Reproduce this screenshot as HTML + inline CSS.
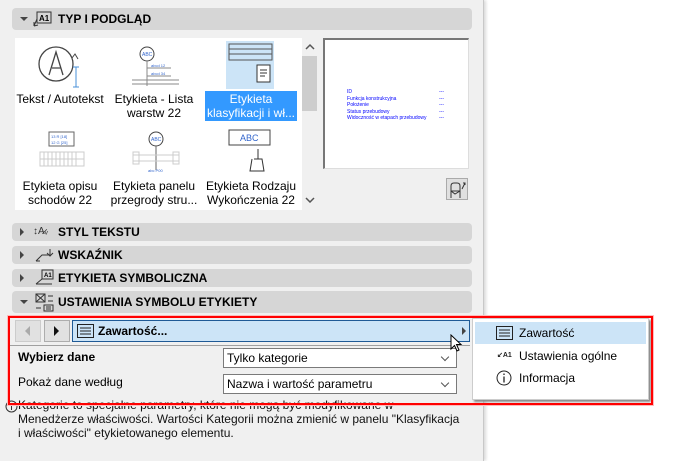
<!DOCTYPE html>
<html><head><meta charset="utf-8"><style>
*{margin:0;padding:0;box-sizing:border-box}
body{width:690px;height:461px;overflow:hidden;background:#fff;font-family:"Liberation Sans",sans-serif;font-size:12px;color:#000;position:relative}
.abs{position:absolute}
#left{left:0;top:0;width:484px;height:461px;background:#f0f0f0;border-right:1px solid #c8c8c8;box-shadow:2px 0 3px rgba(0,0,0,.15)}
.hdr{position:absolute;left:12px;width:460px;background:#d6d6d6;border-radius:4px;font-weight:bold;font-size:12px;line-height:18px}
.hdr .t{position:absolute;left:46px}
.tri{position:absolute;left:8px;width:0;height:0}
.lbl{position:absolute;text-align:center;font-size:12px;line-height:14px;width:96px}
.combo{position:absolute;left:223px;width:234px;background:#fff;border:1px solid #7a7a7a;font-size:12px;line-height:18px;padding-left:3px}
.combo:after{content:"";position:absolute;right:8px;top:5px;width:5px;height:5px;border-right:1px solid #555;border-bottom:1px solid #555;transform:rotate(45deg)}
</style></head><body>
<div id="left" class="abs"></div>

<div class="hdr" style="top:8px;height:22px;line-height:22px"><div class="tri" style="top:9px;border-left:4px solid transparent;border-right:4px solid transparent;border-top:4px solid #444"></div>
<svg class="abs" style="left:20px;top:2px" width="22" height="18"><rect x="5" y="2" width="14" height="11" fill="none" stroke="#333"/><text x="7" y="11" font-size="8" font-family="Liberation Sans">A1</text><path d="M5 9 L2 16 M2 16 L6 15 M2 16 L2 12" stroke="#333" fill="none"/></svg>
<span class="t">TYP I PODGLĄD</span></div>

<div class="abs" style="left:15px;top:38px;width:287px;height:172px;background:#fff"></div>
<svg class="abs" style="left:36px;top:40px" width="50" height="50"><circle cx="20" cy="24" r="17" fill="none" stroke="#444" stroke-width="1.3"/><path d="M36 18 L39 14 L42 19" fill="none" stroke="#444"/><path d="M13 35 L20 12 L27 35 M16 28 L25 28" stroke="#444" fill="none" stroke-width="1.3"/><path d="M40 27 V47 M37 27 H43 M37 47 H43" stroke="#4a90d9"/></svg>
<div class="lbl" style="left:12px;top:92px">Tekst / Autotekst</div>
<svg class="abs" style="left:131px;top:44px" width="50" height="48"><circle cx="16" cy="10" r="7" fill="#fff" stroke="#444"/><text x="11" y="12" font-size="5" fill="#36c">ABC</text><path d="M16 17 V42 M16 24 H40 M16 32 H40 M1 36 H48 M1 40 H48" stroke="#888" fill="none"/><text x="20" y="23" font-size="4" fill="#36c">abcd 12</text><text x="20" y="31" font-size="4" fill="#36c">abcd 34</text></svg>
<div class="lbl" style="left:106px;top:92px">Etykieta - Lista<br>warstw 22</div>
<div class="abs" style="left:226px;top:41px;width:48px;height:48px;background:#cce4f7"></div>
<svg class="abs" style="left:228px;top:43px" width="46" height="46"><rect x="1" y="1" width="43" height="16" fill="none" stroke="#555"/><path d="M1 6 H44 M1 11 H44" stroke="#555"/><rect x="29" y="22" width="13" height="17" fill="#fff" stroke="#333"/><path d="M32 27 H39 M32 30 H39 M32 33 H37" stroke="#333"/></svg>
<div class="lbl" style="left:205px;top:91px;width:92px;background:#3399ff;color:#fff;padding:1px 0">Etykieta<br>klasyfikacji i wł...</div>
<svg class="abs" style="left:38px;top:130px" width="48" height="38"><rect x="11" y="2" width="25" height="14" fill="none" stroke="#666"/><text x="13" y="8" font-size="4" fill="#36c">13 R [18]</text><text x="13" y="14" font-size="4" fill="#36c">12 G [25]</text><rect x="2" y="22" width="44" height="14" fill="none" stroke="#ccc"/><path d="M6 22 V36 M10 22 V36 M14 22 V36 M18 22 V36 M22 22 V36 M26 22 V36 M30 22 V36 M34 22 V36 M38 22 V36 M2 29 H46" stroke="#ccc"/></svg>
<div class="lbl" style="left:12px;top:179px">Etykieta opisu<br>schodów 22</div>
<svg class="abs" style="left:131px;top:130px" width="50" height="44"><circle cx="25" cy="9" r="7" fill="#fff" stroke="#444"/><text x="20" y="11" font-size="5" fill="#36c">ABC</text><path d="M25 16 V40" stroke="#666"/><path d="M2 25 H48 M2 31 H48" stroke="#ccc"/><rect x="2" y="22" width="6" height="12" fill="none" stroke="#ccc"/><rect x="42" y="22" width="6" height="12" fill="none" stroke="#ccc"/><text x="17" y="42" font-size="4" fill="#36c">abc P00</text></svg>
<div class="lbl" style="left:106px;top:179px">Etykieta panelu<br>przegrody stru...</div>
<svg class="abs" style="left:228px;top:129px" width="46" height="46"><rect x="1" y="1" width="41" height="15" fill="#fff" stroke="#444"/><text x="12" y="12" font-size="9" fill="#36c">ABC</text><path d="M30 20 V30 M26 30 H34 L36 42 H22 L24 30" fill="none" stroke="#333"/></svg>
<div class="lbl" style="left:200px;top:179px;width:102px">Etykieta Rodzaju<br>Wykończenia 22</div>

<div class="abs" style="left:302px;top:38px;width:15px;height:172px;background:#f0f0f0"></div>
<div class="abs" style="left:302px;top:56px;width:15px;height:55px;background:#cdcdcd"></div>
<svg class="abs" style="left:304px;top:43px" width="12" height="160"><path d="M2 6 L6 2 L10 6" stroke="#555" fill="none" stroke-width="1.5"/><path d="M2 155 L6 159 L10 155" stroke="#555" fill="none" stroke-width="1.5"/></svg>

<div class="abs" style="left:323px;top:38px;width:146px;height:131px;background:#fff;border:1px solid #ddd;border-top:2px solid #777;border-left:2px solid #777;font-size:5px;color:#00f;line-height:6.5px">
<div class="abs" style="left:22px;top:49px">ID<br>Funkcja konstrukcyjna<br>Położenie<br>Status przebudowy<br>Widoczność w etapach przebudowy</div>
<div class="abs" style="left:114px;top:49px">---<br>---<br>---<br>---<br>---</div></div>
<div class="abs" style="left:446px;top:178px;width:22px;height:22px;background:#e0e0e0;border:1px solid #aaa"></div>
<svg class="abs" style="left:448px;top:180px" width="20" height="20"><path d="M3 18 V6 Q3 3 6 3 H9 Q12 3 12 6 V18 M3 11 H12 M3 11 L7 14 L12 11" fill="none" stroke="#333"/><path d="M14 9 L17 3 M15 3 H17 V5" stroke="#333" fill="none"/></svg>

<div class="hdr" style="top:223px;height:18px"><div class="tri" style="top:5px;border-top:4px solid transparent;border-bottom:4px solid transparent;border-left:4px solid #444"></div><span class="abs" style="left:21px;top:0;font-weight:normal;font-size:10px;color:#333">↕A̷ᵥ</span><span class="t">STYL TEKSTU</span></div>
<div class="hdr" style="top:246px;height:18px"><div class="tri" style="top:5px;border-top:4px solid transparent;border-bottom:4px solid transparent;border-left:4px solid #444"></div><svg class="abs" style="left:22px;top:1px" width="20" height="16"><path d="M2 14 L8 8 H16 V2 M13 6 L16 9 L19 6 M2 14 H6" fill="none" stroke="#333"/></svg><span class="t">WSKAŹNIK</span></div>
<div class="hdr" style="top:269px;height:18px"><div class="tri" style="top:5px;border-top:4px solid transparent;border-bottom:4px solid transparent;border-left:4px solid #444"></div><svg class="abs" style="left:22px;top:0" width="22" height="17"><rect x="8" y="1" width="11" height="9" fill="none" stroke="#333"/><text x="10" y="8" font-size="6">A1</text><path d="M2 15 L8 10 M2 15 H18" stroke="#333"/></svg><span class="t">ETYKIETA SYMBOLICZNA</span></div>
<div class="hdr" style="top:291px;height:22px;line-height:22px"><div class="tri" style="top:9px;border-left:4px solid transparent;border-right:4px solid transparent;border-top:4px solid #444"></div><svg class="abs" style="left:22px;top:2px" width="22" height="19"><rect x="2" y="1" width="9" height="8" fill="none" stroke="#333"/><path d="M2 1 L11 9 M11 1 L2 9 M14 3 H19 M14 8 H19 M10 12 H19 V18 H10 Z M12 14 H17 M12 16 H17 M2 15 H7" fill="none" stroke="#333"/></svg><span class="t">USTAWIENIA SYMBOLU ETYKIETY</span></div>

<div class="abs" style="left:15px;top:320px;width:26px;height:22px;background:#e1e1e1;border:1px solid #ccc"></div>
<div class="abs" style="left:25px;top:326px;border-top:5px solid transparent;border-bottom:5px solid transparent;border-right:5px solid #aaa"></div>
<div class="abs" style="left:44px;top:320px;width:26px;height:22px;background:#e1e1e1;border:1px solid #adadad"></div>
<div class="abs" style="left:54px;top:326px;border-top:5px solid transparent;border-bottom:5px solid transparent;border-left:5px solid #111"></div>
<div class="abs" style="left:72px;top:320px;width:398px;height:22px;background:#cce4f7;border:1px solid #1f5a96"></div>
<svg class="abs" style="left:77px;top:324px" width="18" height="14"><rect x="0.5" y="0.5" width="16" height="13" fill="none" stroke="#222"/><path d="M3 4 H14 M3 7 H14 M3 10 H14" stroke="#222"/></svg>
<div class="abs" style="left:98px;top:324px;font-weight:bold;font-size:12px">Zawartość...</div>
<div class="abs" style="left:462px;top:327px;border-top:4px solid transparent;border-bottom:4px solid transparent;border-left:4px solid #444"></div>
<div class="abs" style="left:10px;top:345px;width:460px;height:1px;background:#a0a0a0"></div>

<div class="abs" style="left:18px;top:350px;font-weight:bold">Wybierz dane</div>
<div class="combo" style="top:348px;height:20px">Tylko kategorie</div>
<div class="abs" style="left:18px;top:375px">Pokaż dane według</div>
<div class="combo" style="top:374px;height:20px">Nazwa i wartość parametru</div>

<svg class="abs" style="left:5px;top:400px" width="13" height="13"><circle cx="6.5" cy="6.5" r="5.5" fill="none" stroke="#333"/><path d="M6.5 5 V10 M6.5 3 V4" stroke="#333"/></svg>
<div class="abs" style="left:18px;top:398px;line-height:14px;font-size:12px;color:#111">Kategorie to specjalne parametry, które nie mogą być modyfikowane w<br>Menedżerze właściwości. Wartości Kategorii można zmienić w panelu "Klasyfikacja<br>i właściwości" etykietowanego elementu.</div>

<div class="abs" style="left:472px;top:318px;width:177px;height:82px;background:#fff;border:1px solid #ccc;box-shadow:2px 2px 2px #888"></div>
<div class="abs" style="left:475px;top:322px;width:171px;height:22px;background:#cce4f7"></div>
<svg class="abs" style="left:496px;top:326px" width="18" height="15"><rect x="0.5" y="0.5" width="16" height="13" fill="none" stroke="#222"/><path d="M3 4 H14 M3 7 H14 M3 10 H14" stroke="#222"/></svg>
<div class="abs" style="left:519px;top:326px">Zawartość</div>
<div class="abs" style="left:497px;top:351px;font-size:7px;font-weight:bold;color:#222">↙A1</div>
<div class="abs" style="left:519px;top:349px">Ustawienia ogólne</div>
<svg class="abs" style="left:496px;top:370px" width="16" height="16"><circle cx="8" cy="8" r="7" fill="none" stroke="#222"/><path d="M8 6.5 V12.5 M8 3.5 V5" stroke="#222" stroke-width="1.3"/></svg>
<div class="abs" style="left:519px;top:371px">Informacja</div>

<svg class="abs" style="left:450px;top:334px" width="14" height="20"><path d="M1 1 V15 L4.5 11.5 L7 17 L9 16 L6.5 10.5 H11 Z" fill="#fff" stroke="#000"/></svg>

<div class="abs" style="left:8px;top:316px;width:645px;height:89px;border:2px solid #f00;box-shadow:0 0 0 1px #fbb"></div>
</body></html>
